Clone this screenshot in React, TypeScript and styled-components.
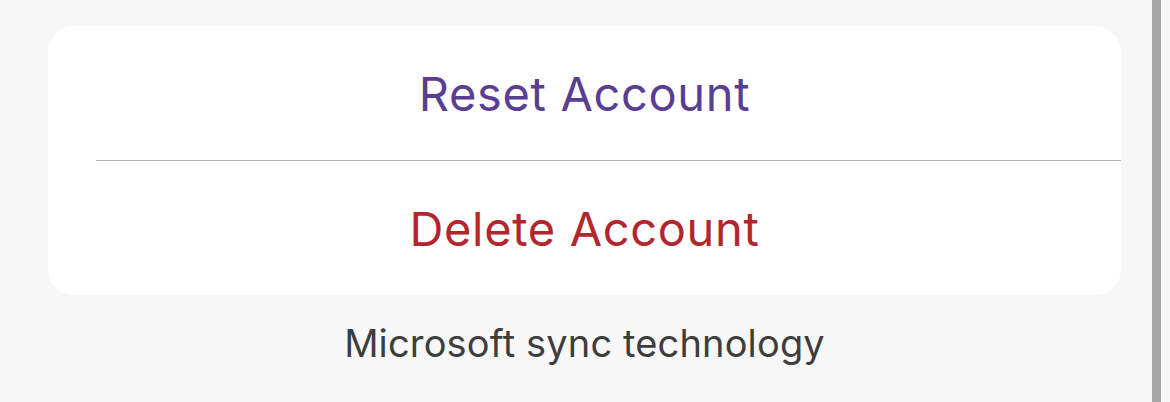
import React from "react";
import styled, { createGlobalStyle } from "styled-components";

const Global = createGlobalStyle`
  html, body { margin: 0; padding: 0; background: #f7f7f7; }
  body { font-family: Inter, "Liberation Sans", sans-serif; -webkit-font-smoothing: antialiased; }
`;

const Page = styled.div`
  position: relative;
  width: 1170px;
  height: 402px;
  box-sizing: border-box;
  padding: 26px 49px 0 48px;
  display: flex;
  flex-direction: column;
  background: #f7f7f7;
  overflow: hidden;
`;

const Card = styled.div`
  background: #ffffff;
  border-radius: 26px;
  display: flex;
  flex-direction: column;
  overflow: hidden;
`;

const ActionRow = styled.button<{ $tone: string }>`
  all: unset;
  height: 134px;
  display: flex;
  align-items: center;
  justify-content: center;
  font-family: Inter, "Liberation Sans", sans-serif;
  font-size: 47px;
  letter-spacing: 0.65px;
  color: ${(p) => p.$tone};
  cursor: pointer;
`;

const Divider = styled.div`
  height: 1px;
  margin-left: 48px;
  background: #b3b3b3;
`;

const Footer = styled.div`
  margin-top: 25px;
  text-align: center;
  font-family: Inter, "Liberation Sans", sans-serif;
  font-size: 38px;
  letter-spacing: 0.15px;
  color: #3d3d3d;
`;

const Scrollbar = styled.div`
  position: absolute;
  top: 0;
  bottom: 0;
  left: 1152px;
  width: 9px;
  background: #a5a5a5;
`;

export default function App() {
  return (
    <>
      <Global />
      <Page>
        <Card>
          <ActionRow $tone="#5a3e93">Reset Account</ActionRow>
          <Divider />
          <ActionRow $tone="#b4262d">Delete Account</ActionRow>
        </Card>
        <Footer>Microsoft sync technology</Footer>
        <Scrollbar />
      </Page>
    </>
  );
}
